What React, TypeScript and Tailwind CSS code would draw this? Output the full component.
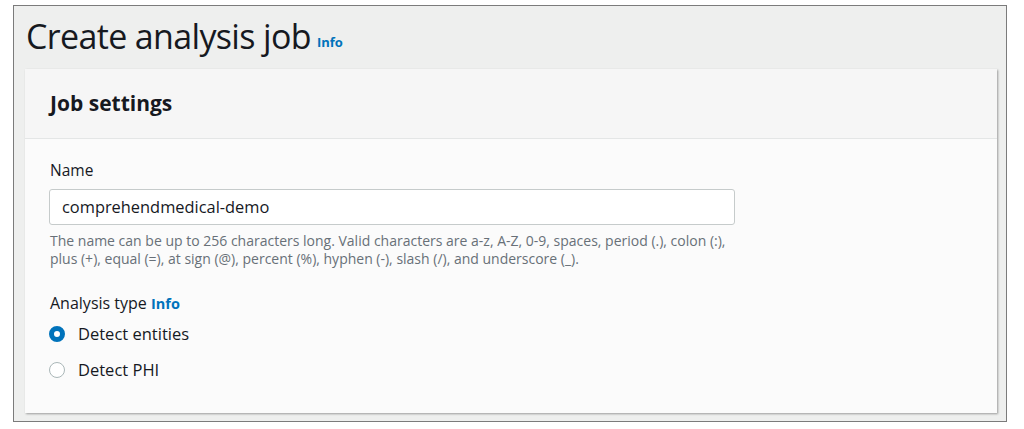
import React from "react";

function InfoLink({ className = "" }: { className?: string }) {
  return <span className={`font-bold text-[#0073bb] ${className}`}>Info</span>;
}

function Radio({ checked, label }: { checked?: boolean; label: string }) {
  return (
    <label className="flex items-center gap-[13px] h-[36px]">
      {checked ? (
        <span className="w-[16px] h-[16px] rounded-full border-[5px] border-[#0073bb] bg-white" />
      ) : (
        <span className="w-[16px] h-[16px] rounded-full border border-[#aab7b8] bg-white" />
      )}
      <span className="text-[16.5px] text-[#16191f]">{label}</span>
    </label>
  );
}

export default function App() {
  return (
    <div className="w-[1024px] h-[429px] bg-white pt-[5px] pl-[13px] font-['Open_Sans',sans-serif]">
      <div className="w-[994px] h-[417px] border border-[#7b7b7b] bg-[#eeefee] pl-[11px] pr-[9px]">
        <div className="flex items-end h-[63px] pl-[1px] pb-[16px]">
          <h1 className="text-[34px] leading-none text-[#16191f] tracking-[-0.65px]">Create analysis job</h1>
          <InfoLink className="text-[13px] ml-[6px] mb-[1px]" />
        </div>
        <div className="h-[344px] bg-[#fbfbfb] shadow-[1px_1px_2px_rgba(0,0,0,0.35)]">
          <div className="h-[70px] bg-[#f6f6f6] border-b border-[#e4e6e6] flex items-center px-[25px]">
            <h2 className="text-[21px] font-bold text-[#16191f]">Job settings</h2>
          </div>
          <div className="px-[24px] pt-[20px]">
            <div className="text-[15.5px] text-[#16191f] pl-[1px]">Name</div>
            <div className="mt-[7px] w-[686px] h-[36px] rounded-[3px] border border-[#c6cbcb] bg-white flex items-center px-[12px] text-[16.4px] text-[#16191f]">
              comprehendmedical-demo
            </div>
            <p className="mt-[7px] text-[14px] leading-[18px] text-[#687078] pl-[1px]">
              The name can be up to 256 characters long. Valid characters are a-z, A-Z, 0-9, spaces, period (.), colon (:),
              <br />
              plus (+), equal (=), at sign (@), percent (%), hyphen (-), slash (/), and underscore (_).
            </p>
            <div className="mt-[23px] text-[16px] text-[#16191f] pl-[1px]">
              Analysis type <InfoLink className="text-[14.5px]" />
            </div>
            <div className="mt-[1px]">
              <Radio checked label="Detect entities" />
              <Radio label="Detect PHI" />
            </div>
          </div>
        </div>
      </div>
    </div>
  );
}
